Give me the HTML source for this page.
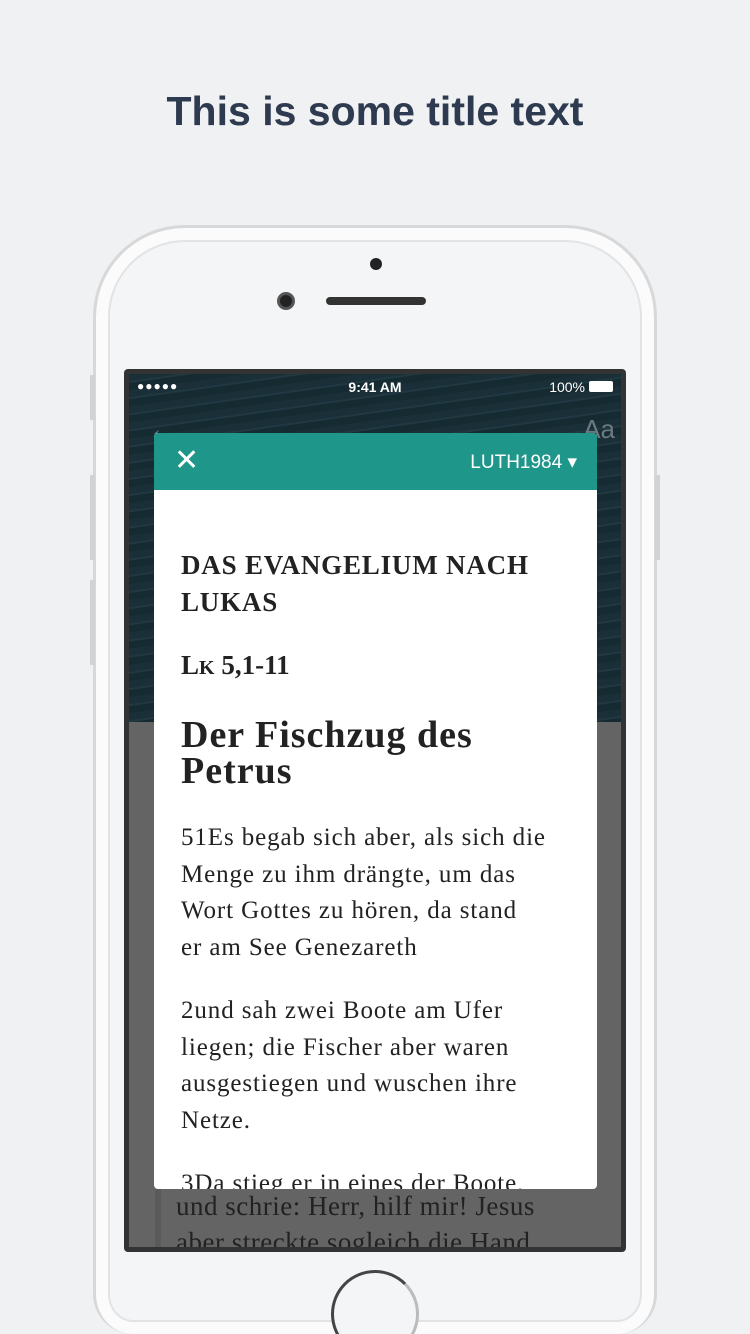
<!DOCTYPE html>
<html style="overflow:hidden;height:1334px"><head><meta charset="utf-8"><style>
*{margin:0;padding:0;box-sizing:border-box}
body{width:750px;height:1334px;background:#f0f1f3;position:relative;overflow:hidden;font-family:"Liberation Sans",sans-serif}
.wrap{position:absolute;left:0;top:0;width:750px;height:1334px;overflow:hidden}
.title{position:absolute;top:88px;left:0;width:750px;text-align:center;font-size:41px;font-weight:bold;color:#2e3a4f}
.phone{position:absolute;left:93px;top:225px;width:564px;height:1109px;border-radius:92px 92px 40px 40px;background:#f4f5f6;border:3px solid #d6d8da;border-bottom:none;box-shadow:inset 0 0 0 12px #fbfbfb,inset 0 0 0 14px #e2e3e5}
.btn{position:absolute;background:#d0d2d4;width:5px}
.screen{position:absolute;left:124px;top:369px;width:502px;height:883px;background:#333;border-radius:4px;overflow:hidden}
.inner{position:absolute;left:5px;top:5px;right:5px;bottom:5px;background:#646464;overflow:hidden}
.sea{position:absolute;left:0;top:0;width:100%;height:348px;background:repeating-linear-gradient(172deg,#1a2f38 0 7px,#203841 7px 9px,#162a32 9px 16px),#1a2f38}
.modal{position:absolute;left:154px;top:433px;width:443px;height:756px;background:#fff;border-radius:4px;overflow:hidden}
.hdr{height:57px;background:#1f968a;color:#fff;position:relative}
.ser{font-family:"Liberation Serif",serif;color:#222}
</style></head><body><div class="wrap">
<div class="title">This is some title text</div>
<div class="phone"></div>
<div class="btn" style="left:90px;top:375px;height:45px"></div>
<div class="btn" style="left:90px;top:475px;height:85px"></div>
<div class="btn" style="left:90px;top:580px;height:85px"></div>
<div class="btn" style="left:655px;top:475px;height:85px"></div>
<div style="position:absolute;left:370px;top:258px;width:12px;height:12px;border-radius:50%;background:#222"></div>
<div style="position:absolute;left:277px;top:292px;width:18px;height:18px;border-radius:50%;background:#222;border:3px solid #555"></div>
<div style="position:absolute;left:326px;top:297px;width:100px;height:8px;border-radius:4px;background:#333"></div>
<div style="position:absolute;left:326px;top:1266px;width:100px;height:68px;overflow:hidden"><div style="position:absolute;left:5px;top:4px;width:88px;height:88px;border-radius:50%;border:3px solid #444;border-bottom-color:#ddd;border-right-color:#bbb;background:#f4f5f6"></div></div>
<div class="screen"><div class="inner"><div class="sea"></div>
<div style="position:absolute;left:8px;top:5px;color:#fff;font-size:12px;letter-spacing:1px">●●●●●</div>
<div style="position:absolute;left:0;width:100%;top:5px;text-align:center;color:#fff;font-size:14px;font-weight:bold">9:41 AM</div>
<div style="position:absolute;right:36px;top:5px;color:#fff;font-size:14px">100%</div>
<div style="position:absolute;right:8px;top:7px;width:24px;height:11px;background:#fff;border-radius:2px"></div>
<div style="position:absolute;left:20px;top:40px;color:#6a7a80;font-size:26px">←</div>
<div style="position:absolute;right:6px;top:40px;color:#6a7a80;font-size:26px">Aa</div>
<div class="ser" style="position:absolute;left:47px;top:814px;font-size:27px;line-height:36px;letter-spacing:.5px">und schrie: Herr, hilf mir! Jesus<br>aber streckte sogleich die Hand</div>
<div style="position:absolute;left:26px;top:815px;width:6px;height:80px;background:#5a5a5a"></div>
</div></div>
<div class="modal">
<div class="hdr">
<div style="position:absolute;left:20px;top:14px;font-size:30px;line-height:28px;font-weight:300">✕</div>
<div style="position:absolute;right:20px;top:18px;font-size:19px">LUTH1984 ▾</div>
</div>
<div class="ser" style="position:absolute;left:27px;top:114px;font-size:27px;font-weight:bold;line-height:37px;letter-spacing:.8px">DAS EVANGELIUM NACH<br>LUKAS</div>
<div class="ser" style="position:absolute;left:27px;top:217px;font-size:27px;font-weight:bold">L<span style="font-size:20px">K</span> 5,1-11</div>
<div class="ser" style="position:absolute;left:27px;top:284px;font-size:38px;font-weight:bold;line-height:36px;letter-spacing:1px">Der Fischzug des<br>Petrus</div>
<div class="ser" style="position:absolute;left:27px;top:387px;font-size:25px;line-height:36.7px;letter-spacing:.9px;white-space:nowrap">51Es begab sich aber, als sich die<br>Menge zu ihm drängte, um das<br>Wort Gottes zu hören, da stand<br>er am See Genezareth<div style="height:26px"></div>2und sah zwei Boote am Ufer<br>liegen; die Fischer aber waren<br>ausgestiegen und wuschen ihre<br>Netze.<div style="height:26px"></div>3Da stieg er in eines der Boote,</div>
</div>
</div></body></html>
